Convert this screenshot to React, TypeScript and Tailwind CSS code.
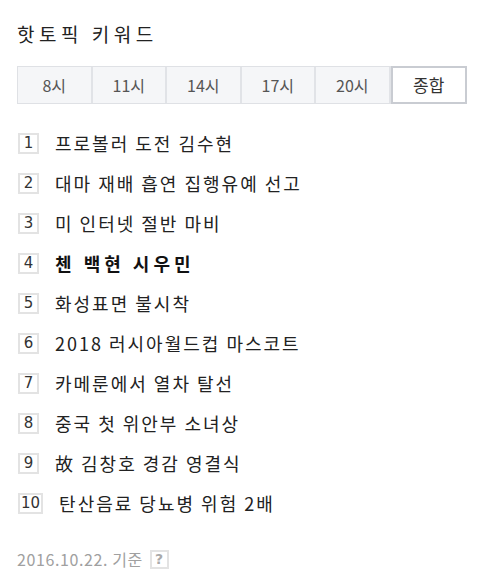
const TABS = ["8시", "11시", "14시", "17시", "20시", "종합"];

const KEYWORDS = [
  "프로볼러 도전 김수현",
  "대마 재배 흡연 집행유예 선고",
  "미 인터넷 절반 마비",
  "첸 백현 시우민",
  "화성표면 불시착",
  "2018 러시아월드컵 마스코트",
  "카메룬에서 열차 탈선",
  "중국 첫 위안부 소녀상",
  "故 김창호 경감 영결식",
  "탄산음료 당뇨병 위험 2배",
];

export default function App() {
  const active = 5;
  const bold = 3;

  return (
    <div
      className="w-[480px] h-[580px] bg-white px-[17px] pt-[22px]"
      style={{ fontFamily: '"Noto Sans CJK KR", "Noto Sans", sans-serif' }}
    >
      <h1 className="text-[19px] leading-[24px] tracking-[4.5px] text-[#222] font-normal">핫토픽 키워드</h1>

      <div className="mt-[20px] flex w-[450px] h-[38px] border border-[#dfe1e5] bg-[#f5f6f8]">
        {TABS.map((t, i) => (
          <div
            key={t}
            className={
              i === active
                ? "flex-1 -my-px -mr-px flex items-center justify-center border-2 border-[#c9ccd2] bg-white text-[17px] text-[#333]"
                : "flex-1 flex items-center justify-center border-r-2 border-[#e1e3e7] text-[16px] text-[#555]"
            }
          >
            {t}
          </div>
        ))}
      </div>

      <ul className="mt-[28px] flex flex-col gap-[18px]">
        {KEYWORDS.map((k, i) => (
          <li key={k} className="flex items-center h-[22px]">
            <span className="ml-px flex items-center justify-center min-w-[21px] h-[21px] px-[1px] border-2 border-[#e3e3e3] font-['DejaVu_Sans',sans-serif] text-[15px] leading-none text-[#333]">
              {i + 1}
            </span>
            <span
              className={
                i === bold
                  ? "ml-[16px] text-[18px] font-bold tracking-[4px] text-[#111]"
                  : "ml-[16px] text-[18px] tracking-[2px] text-[#222]"
              }
            >
              {k}
            </span>
          </li>
        ))}
      </ul>

      <div className="mt-[33px] flex items-center gap-[7px] text-[16px] tracking-[0.6px] text-[#a0a0a0]">
        <span>2016.10.22. 기준</span>
        <span className="flex items-center justify-center w-[19px] h-[19px] border-2 border-[#e3e3e3] font-['DejaVu_Sans',sans-serif] text-[14px] font-bold text-[#aaa] leading-none">
          ?
        </span>
      </div>
    </div>
  );
}
